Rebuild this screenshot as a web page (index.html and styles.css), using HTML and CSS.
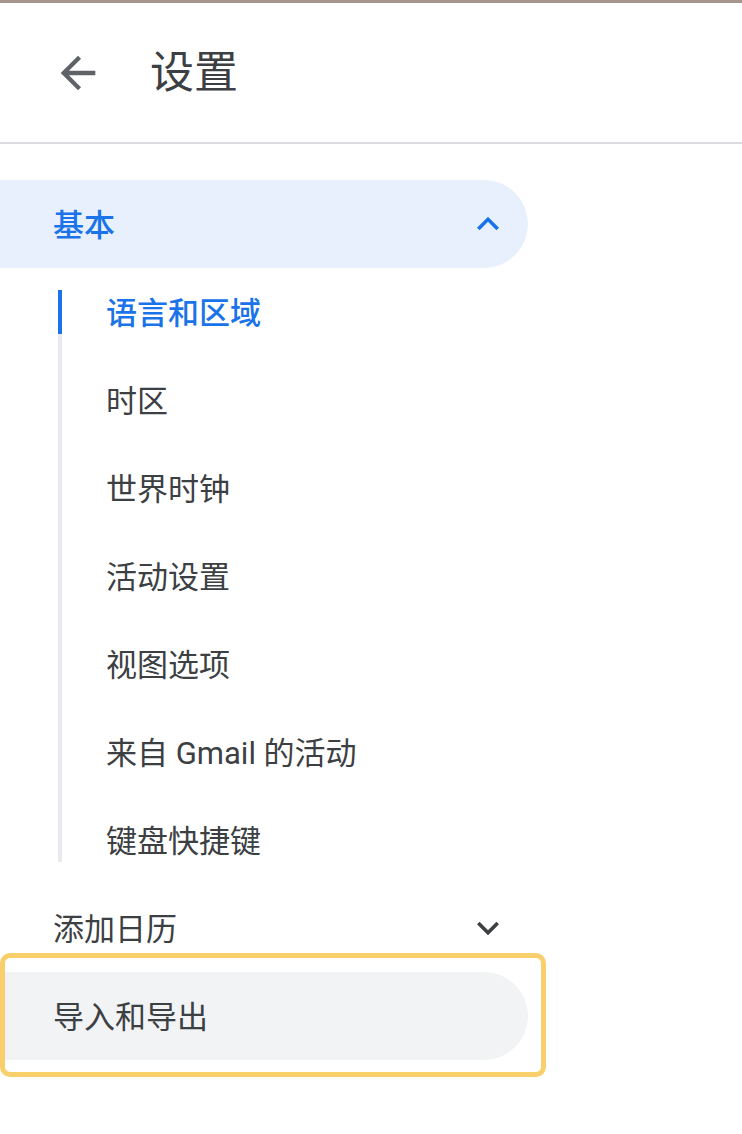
FILE: index.html
```html
<!DOCTYPE html>
<html lang="zh-CN">
<head>
<meta charset="utf-8">
<title>设置</title>
<link rel="stylesheet" href="styles.css">
</head>
<body>
<div class="topline"></div>
<header class="header">
  <span class="back">
    <svg viewBox="0 0 24 24" width="52" height="52"><path d="M20 11H7.83l5.59-5.59L12 4l-8 8 8 8 1.41-1.41L7.83 13H20v-2z" fill="#5f6368"/></svg>
  </span>
  <h1 class="title">设置</h1>
</header>
<nav class="nav">
  <div class="group-head open">
    <span class="group-label">基本</span>
    <span class="chev">
      <svg viewBox="0 0 24 24" width="44" height="44"><path d="M12 8l-6 6 1.41 1.41L12 10.83l4.59 4.58L18 14z" fill="#1a73e8"/></svg>
    </span>
  </div>
  <div class="sub">
    <div class="sub-item active">语言和区域</div>
    <div class="sub-item">时区</div>
    <div class="sub-item">世界时钟</div>
    <div class="sub-item">活动设置</div>
    <div class="sub-item">视图选项</div>
    <div class="sub-item">来自 Gmail 的活动</div>
    <div class="sub-item">键盘快捷键</div>
  </div>
  <div class="group-head">
    <span class="group-label">添加日历</span>
    <span class="chev">
      <svg viewBox="0 0 24 24" width="44" height="44"><path d="M16.59 8.59L12 13.17 7.41 8.59 6 10l6 6 6-6z" fill="#3c4043"/></svg>
    </span>
  </div>
  <div class="group-head hover highlighted">
    <span class="group-label">导入和导出</span>
  </div>
</nav>
</body>
</html>
```

FILE: styles.css
```css
html, body {
  margin: 0;
  padding: 0;
  background: #ffffff;
}
body {
  font-family: Roboto, "Noto Sans CJK SC", sans-serif;
  color: #3c4043;
  width: 742px;
}
.topline {
  height: 3px;
  background: #a8948e;
}
.header {
  height: 141px;
  border-bottom: 2px solid #dadce0;
  display: flex;
  align-items: center;
  box-sizing: border-box;
  padding-left: 52px;
}
.back {
  display: flex;
  width: 52px;
  height: 52px;
}
.title {
  margin: 0 0 0 46px;
  font-size: 44px;
  font-weight: 400;
  color: #3c4043;
  line-height: 1;
}
.nav {
  padding-top: 36px;
  padding-bottom: 40px;
}
.group-head {
  width: 528px;
  height: 88px;
  box-sizing: border-box;
  display: flex;
  align-items: center;
  justify-content: space-between;
  padding-left: 53px;
  padding-right: 18px;
  border-radius: 0 44px 44px 0;
  font-size: 31px;
}
.group-label {
  padding-bottom: 4px;
}
.group-head.open {
  background: #e8f0fe;
  color: #1a73e8;
  font-weight: 500;
}
.group-head.hover {
  background: #f1f3f4;
}
.highlighted {
  position: relative;
}
.highlighted::after {
  content: "";
  position: absolute;
  top: -19px;
  bottom: -17px;
  left: 0;
  right: -18px;
  border: 5px solid #f9cf6c;
  border-radius: 10px;
  pointer-events: none;
}
.chev {
  display: flex;
  width: 44px;
  height: 44px;
}
.sub {
  margin: 22px 0 22px 58px;
  border-left: 4px solid #e8eaed;
  display: flex;
  flex-direction: column;
  gap: 44px;
}
.sub-item {
  height: 44px;
  box-sizing: border-box;
  padding-bottom: 4px;
  display: flex;
  align-items: center;
  padding-left: 44px;
  font-size: 31px;
  color: #3c4043;
}
.sub-item.active {
  margin-left: -4px;
  border-left: 4px solid #1a73e8;
  color: #1a73e8;
  font-weight: 500;
}
```
